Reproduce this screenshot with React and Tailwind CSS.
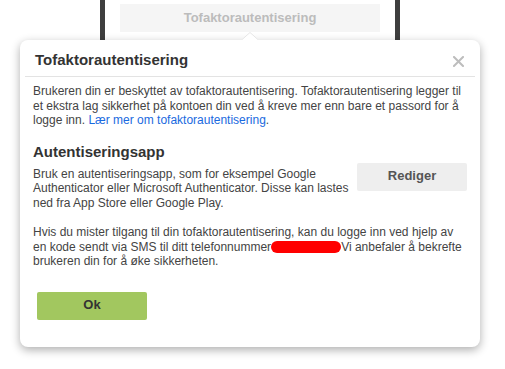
import React from 'react';

function CloseIcon() {
  return (
    <svg width="11" height="11" viewBox="0 0 11 11" className="block">
      <path d="M1 1 L10 10 M10 1 L1 10" stroke="#bdbdbd" strokeWidth="2" strokeLinecap="square" />
    </svg>
  );
}

export default function App() {
  return (
    <div className="w-[505px] h-[369px] bg-white overflow-hidden font-['Liberation_Sans',Arial,sans-serif]">
      {/* phone frame behind the popover */}
      <div className="ml-[100px] w-[300px] h-[40px] border-x-[5px] border-[#3e3e3e] bg-white px-[15px] pt-[4px]">
        <div className="h-[28px] bg-[#f5f5f5] flex items-center justify-center text-[13px] font-bold text-[#bcbcbc]">
          Tofaktorautentisering
        </div>
      </div>

      <div className="relative ml-[20px] w-[460px] bg-white rounded-[8px] shadow-[0_3px_10px_rgba(0,0,0,0.32)]">
        <svg width="20" height="10" viewBox="0 0 20 10" className="absolute top-[-8px] left-[220px]">
          <polygon points="0,9 10,0 20,9" fill="#fff" />
          <path d="M1 8.5 L10 0.5 L19 8.5" fill="none" stroke="#e6e6e6" strokeWidth="1" />
          <rect x="0" y="8" width="20" height="2" fill="#fff" />
        </svg>

        <div className="flex items-start justify-between pl-[15px] pr-[16px] pt-[11px] pb-[7px]">
          <h2 className="text-[15px] leading-[18px] font-bold text-[#333]">Tofaktorautentisering</h2>
          <button className="mt-[5px]">
            <CloseIcon />
          </button>
        </div>
        <div className="mx-[5px] h-px bg-[#e3e3e3]" />

        <div className="px-[13px] pt-[7px] pb-[27px] text-[12px] leading-[14.5px] text-[#444]">
          <p>
            Brukeren din er beskyttet av tofaktorautentisering. Tofaktorautentisering legger til et ekstra lag sikkerhet på kontoen din ved å kreve mer enn bare et passord for å logge inn.{' '}
            <a className="text-[#1a6ae0]">Lær mer om tofaktorautentisering</a>.
          </p>

          <h3 className="mt-[15px] text-[15px] leading-[18px] font-bold text-[#333]">Autentiseringsapp</h3>

          <div className="mt-[2px] flex items-start gap-[4px]">
            <p className="flex-1 mt-[4px]">
              Bruk en autentiseringsapp, som for eksempel Google Authenticator eller Microsoft Authenticator. Disse kan lastes ned fra App Store eller Google Play.
            </p>
            <button className="w-[110px] h-[28px] bg-[#eeeeee] rounded-[2px] text-[13px] font-bold text-[#555]">
              Rediger
            </button>
          </div>

          <p className="mt-[15px]">
            Hvis du mister tilgang til din tofaktorautentisering, kan du logge inn ved hjelp av en kode sendt via SMS til ditt telefonnummer
            <span className="inline-block w-[70px] h-[12px] rounded-full bg-[#ff0000] align-[-2px]" />
            Vi anbefaler å bekrefte brukeren din for å øke sikkerheten.
          </p>

          <button className="mt-[23px] ml-[4px] w-[110px] h-[28px] bg-[#a2c75f] rounded-[2px] text-[13px] font-bold text-[#333]">
            Ok
          </button>
        </div>
      </div>
    </div>
  );
}
